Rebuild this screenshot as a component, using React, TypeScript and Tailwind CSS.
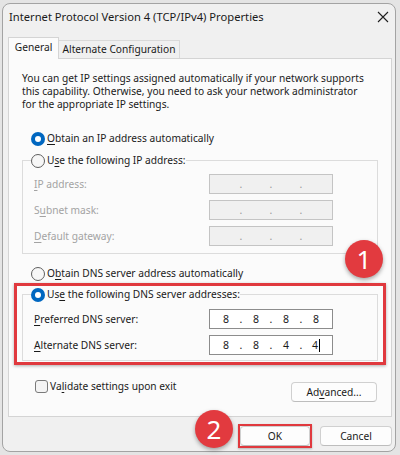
import { Fragment } from "react";

function Radio({ checked }: { checked?: boolean }) {
  if (checked) {
    return (
      <span className="flex h-[14px] w-[14px] shrink-0 items-center justify-center rounded-full bg-[#0067c0]">
        <span className="h-[6px] w-[6px] rounded-full bg-white" />
      </span>
    );
  }
  return <span className="h-[14px] w-[14px] shrink-0 rounded-full border border-[#5f5f5f] bg-[#f7f7f7]" />;
}

function IpField({ values, disabled, cursor }: { values?: string[]; disabled?: boolean; cursor?: boolean }) {
  return (
    <div
      className={`flex h-[20px] w-[124px] items-center border pl-[4px] text-[10.5px] ${
        disabled ? "border-[#c4c4c4] bg-[#f0f0f0] text-[#9a9a9a]" : "border-[#8c8c8c] bg-white text-[#1a1a1a]"
      }`}
    >
      {[0, 1, 2, 3].map((i) => (
        <Fragment key={i}>
          <span className="flex w-[24px] items-center justify-center">
            {values?.[i] ?? ""}
            {cursor && i === 3 && <span className="ml-[1px] h-[13px] w-px bg-black" />}
          </span>
          {i < 3 && <span className="w-[6px] text-center">.</span>}
        </Fragment>
      ))}
    </div>
  );
}

function Button({ label, className = "" }: { label: React.ReactNode; className?: string }) {
  return (
    <div
      className={`flex h-[20px] items-center justify-center rounded-[4px] border border-[#d0d0d0] border-b-[#bdbdbd] bg-[#fdfdfd] text-[#1a1a1a] ${className}`}
    >
      {label}
    </div>
  );
}

export default function App() {
  return (
    <div className="relative h-[455px] w-[400px] overflow-hidden bg-[#e4e4e4] pl-[2px] pt-[3px] font-['Noto_Sans',sans-serif] text-[10.2px] leading-[13px] text-[#1a1a1a]">
      <div className="flex h-[449px] w-[394px] flex-col rounded-lg border border-[#a3a3a3] bg-[#f0f0f0]">
        {/* title bar */}
        <div className="flex h-[25px] shrink-0 items-center justify-between pl-[6px] pr-[5px]">
          <span className="text-[11.2px]">Internet Protocol Version 4 (TCP/IPv4) Properties</span>
          <svg width="12" height="12" viewBox="0 0 12 12" className="mr-[1px]">
            <path d="M1 1L11 11M11 1L1 11" stroke="#1f1f1f" strokeWidth="1.1" />
          </svg>
        </div>

        {/* tabs */}
        <div className="relative z-10 ml-[5px] mt-[8px] flex h-[21px] items-end">
          <div className="-mb-px flex h-[22px] w-[51px] items-center justify-center border border-b-0 border-[#d4d4d4] bg-[#fbfbfb] pb-[2px]">
            General
          </div>
          <div className="flex h-[18px] w-[121px] items-center justify-center border border-b-0 border-l-0 border-[#d9d9d9] bg-[#f0f0f0]">
            Alternate Configuration
          </div>
        </div>

        {/* panel */}
        <div className="ml-[5px] flex h-[359px] w-[384px] flex-col border border-[#d4d4d4] bg-[#fbfbfb] px-[13px] pt-[13px]">
          <p className="h-[39px]">
            You can get IP settings assigned automatically if your network supports
            <br />
            this capability. Otherwise, you need to ask your network administrator
            <br />
            for the appropriate IP settings.
          </p>

          <div className="ml-[9px] mt-[20px] flex h-[15px] items-center gap-[2px]">
            <Radio checked />
            <span>
              <span className="underline underline-offset-2">O</span>btain an IP address automatically
            </span>
          </div>

          <fieldset className="mt-[7px] border border-[#dcdcdc] pb-[7px]">
            <legend className="ml-[8px] flex h-[15px] items-center gap-[2px]">
              <Radio />
              <span>
                U<span className="underline underline-offset-2">s</span>e the following IP address:
              </span>
            </legend>
            <div className="mt-[6px] flex flex-col gap-[6px] pl-[11px] text-[#a3a3a3]">
              <div className="flex items-center">
                <span className="w-[175px]">
                  <span className="underline underline-offset-2">I</span>P address:
                </span>
                <IpField disabled />
              </div>
              <div className="flex items-center">
                <span className="w-[175px]">
                  S<span className="underline underline-offset-2">u</span>bnet mask:
                </span>
                <IpField disabled />
              </div>
              <div className="flex items-center">
                <span className="w-[175px]">
                  <span className="underline underline-offset-2">D</span>efault gateway:
                </span>
                <IpField disabled />
              </div>
            </div>
          </fieldset>

          <div className="ml-[9px] mt-[12px] flex h-[15px] items-center gap-[2px]">
            <Radio />
            <span>
              O<span className="underline underline-offset-2">b</span>tain DNS server address automatically
            </span>
          </div>

          <fieldset className="mt-[6px] border border-[#dcdcdc] pb-[5px]">
            <legend className="ml-[8px] flex h-[15px] items-center gap-[2px]">
              <Radio checked />
              <span>
                Us<span className="underline underline-offset-2">e</span> the following DNS server addresses:
              </span>
            </legend>
            <div className="mt-[7px] flex flex-col gap-[6px] pl-[11px]">
              <div className="flex items-center">
                <span className="w-[175px]">
                  <span className="underline underline-offset-2">P</span>referred DNS server:
                </span>
                <IpField values={["8", "8", "8", "8"]} />
              </div>
              <div className="flex items-center">
                <span className="w-[175px]">
                  <span className="underline underline-offset-2">A</span>lternate DNS server:
                </span>
                <IpField values={["8", "8", "4", "4"]} cursor />
              </div>
            </div>
          </fieldset>

          <div className="mt-[18px] flex items-start justify-between">
            <div className="ml-[13px] flex h-[15px] items-center gap-[2px]">
              <span className="h-[13px] w-[13px] rounded-[3px] border border-[#7a7a7a] bg-[#f4f4f4]" />
              <span>
                Va<span className="underline underline-offset-2">l</span>idate settings upon exit
              </span>
            </div>
            <Button
              className="mr-px mt-[3px] w-[86px]"
              label={
                <span>
                  Ad<span className="underline underline-offset-2">v</span>anced...
                </span>
              }
            />
          </div>
        </div>

        {/* bottom buttons */}
        <div className="mr-[3px] mt-[7px] flex items-start justify-end">
          <div className="border-[2px] border-[#e0393e] shadow-[0_1px_2px_rgba(0,0,0,0.25)]">
            <Button className="w-[70px]" label="OK" />
          </div>
          <Button className="ml-[8px] mt-[2px] w-[72px]" label="Cancel" />
        </div>
      </div>

      {/* annotations */}
      <div className="absolute left-[14px] top-[283px] h-[82px] w-[372px] border-[3px] border-[#e0393e] shadow-[0_1px_3px_rgba(0,0,0,0.3)]" />
      <div className="absolute left-[345px] top-[240px] flex h-[38px] w-[38px] items-center justify-center rounded-full bg-[#e23a3f] text-[26px] leading-none text-white shadow-[0_2px_4px_rgba(0,0,0,0.35)]">
        1
      </div>
      <div className="absolute left-[195px] top-[410px] flex h-[38px] w-[38px] items-center justify-center rounded-full bg-[#e23a3f] text-[26px] leading-none text-white shadow-[0_2px_4px_rgba(0,0,0,0.35)]">
        2
      </div>
    </div>
  );
}
